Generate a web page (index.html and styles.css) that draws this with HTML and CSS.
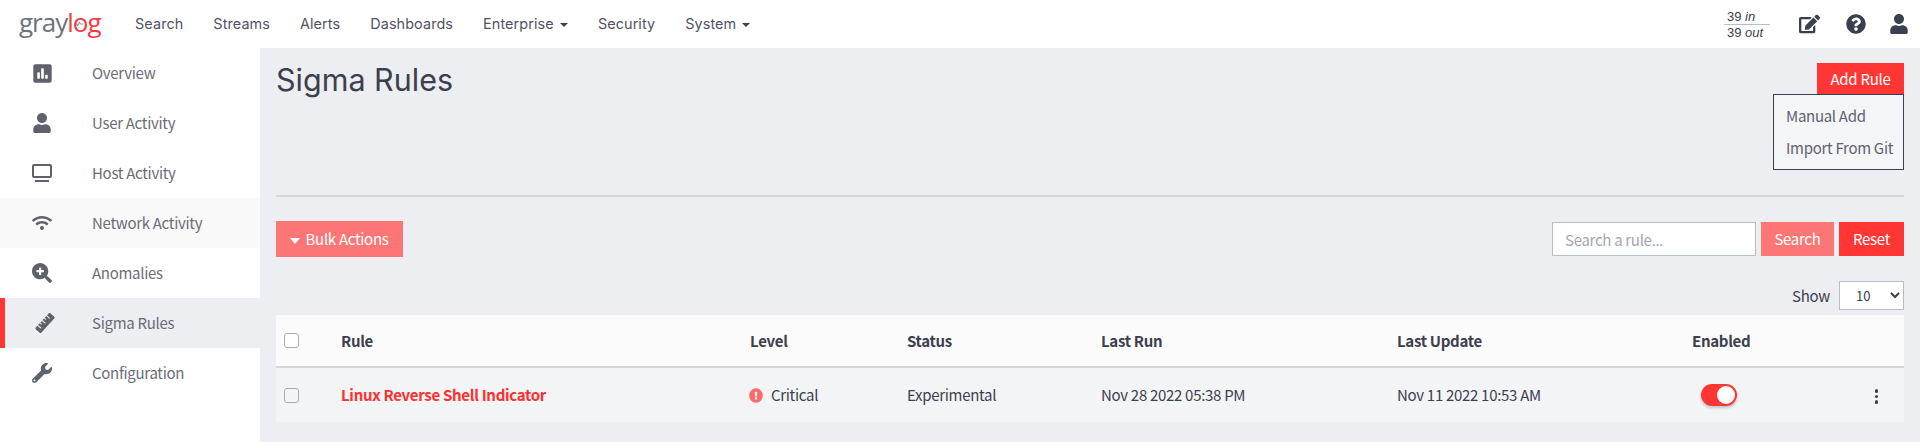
FILE: index.html
```html
<!DOCTYPE html>
<html lang="en">
<head>
  <meta charset="UTF-8" />
  <title>Sigma Rules - Graylog</title>
  <link rel="stylesheet" href="styles.css">
</head>
<body>

  <header class="topbar">
    <a class="logo" href="#">
      <span class="logo-gray">gray</span><span class="logo-red">log</span>
      <svg class="logo-pulse" viewBox="0 0 10 6"><path d="M0 3h3l1.2 2L6 1l1 2h3"/></svg>
    </a>
    <nav class="topnav">
      <a href="#">Search</a>
      <a href="#">Streams</a>
      <a href="#">Alerts</a>
      <a href="#">Dashboards</a>
      <a href="#">Enterprise <i class="caret"></i></a>
      <a href="#">Security</a>
      <a href="#">System <i class="caret"></i></a>
    </nav>
    <div class="top-right">
      <div class="traffic">
        <div class="traffic-in">39 <em>in</em></div>
        <div>39 <em>out</em></div>
      </div>
      <svg class="top-icon icon-edit" viewBox="0 0 576 512"><path d="M402.6 83.2l90.2 90.2c3.8 3.8 3.8 10 0 13.8L274.4 405.6l-92.8 10.3c-12.4 1.4-22.9-9.1-21.5-21.5l10.3-92.8L388.8 83.2c3.8-3.8 10-3.8 13.8 0zm162-22.9l-48.8-48.8c-15.2-15.2-39.9-15.2-55.2 0l-35.4 35.4c-3.8 3.8-3.8 10 0 13.8l90.2 90.2c3.8 3.8 10 3.8 13.8 0l35.4-35.4c15.2-15.3 15.2-40 0-55.2zM384 346.2V448H64V128h229.8c3.2 0 6.2-1.3 8.5-3.5l40-40c7.6-7.6 2.2-20.5-8.5-20.5H48C21.5 64 0 85.5 0 112v352c0 26.5 21.5 48 48 48h352c26.5 0 48-21.5 48-48V306.2c0-10.7-12.9-16-20.5-8.5l-40 40c-2.2 2.3-3.5 5.3-3.5 8.5z"/></svg>
      <svg class="top-icon icon-help" viewBox="0 0 512 512"><path d="M504 256c0 136.997-111.043 248-248 248S8 392.997 8 256C8 119.083 119.043 8 256 8s248 111.083 248 248zM262.655 90c-54.497 0-89.255 22.957-116.549 63.758-3.536 5.286-2.353 12.415 2.715 16.258l34.699 26.31c5.205 3.947 12.621 3.008 16.665-2.122 17.864-22.658 30.113-35.797 57.303-35.797 20.429 0 45.698 13.148 45.698 32.958 0 14.976-12.363 22.667-32.534 33.976C247.128 238.528 216 254.941 216 296v4c0 6.627 5.373 12 12 12h56c6.627 0 12-5.373 12-12v-1.333c0-28.462 83.186-29.647 83.186-106.667 0-58.002-60.165-102-116.531-102zM256 338c-25.365 0-46 20.635-46 46 0 25.364 20.635 46 46 46s46-20.636 46-46c0-25.365-20.635-46-46-46z"/></svg>
      <svg class="top-icon icon-user" viewBox="0 0 448 512"><path d="M224 256c70.7 0 128-57.3 128-128S294.7 0 224 0 96 57.3 96 128s57.3 128 128 128zm89.6 32h-16.7c-22.2 10.2-46.9 16-72.9 16s-50.6-5.8-72.9-16h-16.7C60.2 288 0 348.2 0 422.4V464c0 26.5 21.5 48 48 48h352c26.5 0 48-21.5 48-48v-41.6c0-74.2-60.2-134.4-134.4-134.4z"/></svg>
    </div>
  </header>

  <div class="layout">
    <aside class="sidebar">
      <a class="side-item" href="#">
        <span class="side-icon"><svg width="19" height="21" viewBox="0 0 448 512"><path d="M400 32H48C21.5 32 0 53.5 0 80v352c0 26.5 21.5 48 48 48h352c26.5 0 48-21.5 48-48V80c0-26.5-21.5-48-48-48zM160 368c0 8.84-7.16 16-16 16h-32c-8.84 0-16-7.16-16-16V240c0-8.84 7.16-16 16-16h32c8.84 0 16 7.16 16 16v128zm96 0c0 8.84-7.16 16-16 16h-32c-8.84 0-16-7.16-16-16V144c0-8.84 7.16-16 16-16h32c8.84 0 16 7.16 16 16v224zm96 0c0 8.84-7.16 16-16 16h-32c-8.84 0-16-7.16-16-16v-64c0-8.84 7.16-16 16-16h32c8.84 0 16 7.16 16 16v64z"/></svg></span>
        Overview
      </a>
      <a class="side-item" href="#">
        <span class="side-icon"><svg width="18" height="20" viewBox="0 0 448 512"><path d="M224 256c70.7 0 128-57.3 128-128S294.7 0 224 0 96 57.3 96 128s57.3 128 128 128zm89.6 32h-16.7c-22.2 10.2-46.9 16-72.9 16s-50.6-5.8-72.9-16h-16.7C60.2 288 0 348.2 0 422.4V464c0 26.5 21.5 48 48 48h352c26.5 0 48-21.5 48-48v-41.6c0-74.2-60.2-134.4-134.4-134.4z"/></svg></span>
        User Activity
      </a>
      <a class="side-item" href="#">
        <span class="side-icon"><svg width="20" height="18" viewBox="0 0 20 18"><path d="M2 0h16a2 2 0 0 1 2 2v10a2 2 0 0 1-2 2H2a2 2 0 0 1-2-2V2a2 2 0 0 1 2-2zm0 2v10h16V2zM3 16h14v2H3z"/></svg></span>
        Host Activity
      </a>
      <a class="side-item side-item-hover" href="#">
        <span class="side-icon"><svg width="20" height="16" viewBox="0 0 640 512"><path d="M634.91 154.88C457.74-8.99 182.19-8.93 5.09 154.88c-6.66 6.16-6.79 16.59-.35 22.98l34.24 33.97c6.14 6.1 16.02 6.23 22.4.38 145.92-133.68 371.3-133.71 517.25 0 6.38 5.85 16.26 5.71 22.4-.38l34.24-33.97c6.43-6.39 6.3-16.82-.36-22.98zM320 352c-35.35 0-64 28.65-64 64s28.65 64 64 64 64-28.65 64-64-28.65-64-64-64zm202.67-83.59c-115.26-101.93-290.21-101.82-405.34 0-6.9 6.1-7.12 16.69-.57 23.15l34.44 33.99c6 5.92 15.66 6.32 22.05.8 83.95-72.57 209.74-72.41 293.49 0 6.39 5.52 16.05 5.13 22.05-.8l34.44-33.99c6.56-6.46 6.33-17.06-.56-23.15z"/></svg></span>
        Network Activity
      </a>
      <a class="side-item" href="#">
        <span class="side-icon"><svg width="20" height="20" viewBox="0 0 512 512" fill-rule="evenodd"><path d="M304 192v32c0 6.6-5.4 12-12 12h-56v56c0 6.6-5.4 12-12 12h-32c-6.6 0-12-5.4-12-12v-56h-56c-6.6 0-12-5.4-12-12v-32c0-6.6 5.4-12 12-12h56v-56c0-6.6 5.4-12 12-12h32c6.6 0 12 5.4 12 12v56h56c6.6 0 12 5.4 12 12zm201 284.7L476.7 505c-9.4 9.4-24.6 9.4-33.9 0L343 405.3c-4.5-4.5-7-10.6-7-17V372c-35.3 27.6-79.7 44-128 44C93.1 416 0 322.9 0 208S93.1 0 208 0s208 93.1 208 208c0 48.3-16.4 92.7-44 128h16.3c6.4 0 12.5 2.5 17 7l99.7 99.7c9.3 9.4 9.3 24.6 0 34z"/></svg></span>
        Anomalies
      </a>
      <a class="side-item side-item-active" href="#">
        <span class="side-icon"><svg class="ruler" width="22" height="20" viewBox="0 0 640 512"><path d="M635.7 167.2L556.1 31.7c-8.8-15-28.3-20.1-43.5-11.5l-69 39.1L503.3 161c2.2 3.8.9 8.5-2.9 10.7l-13.8 7.8c-3.8 2.2-8.7.9-10.9-2.9L416 75l-55.2 31.3 27.9 47.4c2.2 3.8.9 8.5-2.9 10.7l-13.8 7.8c-3.8 2.2-8.7.9-10.9-2.9L333.2 122 278 153.3 337.8 255c2.2 3.7.9 8.5-2.9 10.7l-13.8 7.8c-3.8 2.2-8.7.9-10.9-2.9l-59.7-101.7-55.2 31.3 27.9 47.4c2.2 3.8.9 8.5-2.9 10.7l-13.8 7.8c-3.8 2.2-8.7.9-10.9-2.9l-27.9-47.5-55.2 31.3 59.7 101.7c2.2 3.7.9 8.5-2.9 10.7l-13.8 7.8c-3.8 2.2-8.7.9-10.9-2.9L84.9 262.9l-69 39.1C.7 310.7-4.6 329.8 4.2 344.8l79.6 135.6c8.8 15 28.3 20.1 43.5 11.5L624.1 210c15.2-8.6 20.4-27.8 11.6-42.8z"/></svg></span>
        Sigma Rules
      </a>
      <a class="side-item" href="#">
        <span class="side-icon"><svg width="20" height="20" viewBox="0 0 512 512"><path d="M507.73 109.1c-2.24-9.03-13.54-12.09-20.12-5.51l-74.36 74.36-67.88-11.31-11.31-67.88 74.36-74.36c6.62-6.62 3.43-17.9-5.66-20.16-47.38-11.74-99.55.91-136.58 37.93-39.64 39.64-50.55 97.1-34.05 147.2L18.74 402.76c-24.99 24.99-24.99 65.51 0 90.5 24.99 24.99 65.51 24.99 90.5 0l213.21-213.21c50.12 16.71 107.47 5.68 147.37-34.22 37.07-37.07 49.7-89.32 37.91-136.73zM64 472c-13.25 0-24-10.75-24-24 0-13.26 10.75-24 24-24s24 10.74 24 24c0 13.25-10.75 24-24 24z"/></svg></span>
        Configuration
      </a>
    </aside>

    <main class="content">
      <section class="page-head">
        <h1>Sigma Rules</h1>
        <div class="add-rule">
          <button class="btn btn-red btn-add">Add Rule</button>
          <div class="add-menu">
            <a href="#">Manual Add</a>
            <a href="#">Import From Git</a>
          </div>
        </div>
      </section>

      <section class="toolbar">
        <button class="btn btn-light btn-bulk"><i class="caret"></i>Bulk Actions</button>
        <div class="search-box">
          <input type="text" placeholder="Search a rule...">
          <button class="btn btn-light btn-search">Search</button>
          <button class="btn btn-red btn-reset">Reset</button>
        </div>
      </section>

      <section class="show-row">
        <label for="show">Show</label>
        <select id="show">
          <option>10</option>
          <option>25</option>
          <option>50</option>
        </select>
      </section>

      <section class="rules">
        <div class="cols rules-head">
          <span class="check"></span>
          <span>Rule</span>
          <span>Level</span>
          <span>Status</span>
          <span>Last Run</span>
          <span>Last Update</span>
          <span>Enabled</span>
        </div>
        <div class="cols rules-row">
          <span class="check"></span>
          <a class="rule-name" href="#">Linux Reverse Shell Indicator</a>
          <span class="level"><svg width="14" height="15" viewBox="0 0 512 512" preserveAspectRatio="none"><path d="M504 256c0 136.997-111.043 248-248 248S8 392.997 8 256C8 119.083 119.043 8 256 8s248 111.083 248 248zm-248 50c-25.405 0-46 20.595-46 46s20.595 46 46 46 46-20.595 46-46-20.595-46-46-46zm-43.673-165.346l7.418 136c.347 6.364 5.609 11.346 11.982 11.346h48.546c6.373 0 11.635-4.982 11.982-11.346l7.418-136c.375-6.874-5.098-12.654-11.982-12.654h-63.383c-6.884 0-12.356 5.78-11.981 12.654z"/></svg>Critical</span>
          <span>Experimental</span>
          <span>Nov 28 2022 05:38 PM</span>
          <span>Nov 11 2022 10:53 AM</span>
          <span class="toggle-cell"><i class="toggle"><i class="knob"></i></i></span>
          <span class="dots"><i></i><i></i><i></i></span>
        </div>
      </section>
    </main>
  </div>

</body>
</html>
```

FILE: styles.css
```css
* {
  box-sizing: border-box;
}

html,
body {
  height: 100%;
}

body {
  margin: 0;
  overflow: hidden;
  font-family: "Noto Sans CJK SC", "Source Sans Pro", "Open Sans", sans-serif;
  font-size: 15px;
  letter-spacing: -0.3px;
  line-height: 20px;
  color: #3c3f4d;
  background-color: #edeef2;
}

a {
  color: inherit;
  text-decoration: none;
}

/* top bar */

.topbar {
  display: flex;
  align-items: center;
  height: 48px;
  background-color: white;
}

.logo {
  position: relative;
  width: 120px;
  padding-left: 19px;
  font-family: "Open Sans", sans-serif;
  font-size: 26px;
  line-height: 30px;
  letter-spacing: -1px;
  margin-top: -5px;
}

.logo-gray {
  color: #6b7280;
}

.logo-red {
  color: #f23b42;
}

.logo-pulse {
  position: absolute;
  left: 74px;
  top: 14px;
  width: 9px;
  height: 6px;
  fill: none;
  stroke: #6b7280;
  stroke-width: 0.9;
}

.topnav {
  display: flex;
}

.topnav a {
  padding: 0 15px;
  font-family: Inter, sans-serif;
  font-size: 14.4px;
  letter-spacing: 0.1px;
  color: #50535f;
}

.caret {
  display: inline-block;
  width: 0;
  height: 0;
  margin-left: 2px;
  vertical-align: middle;
  border-top: 4px solid #3c3f4d;
  border-left: 4px solid transparent;
  border-right: 4px solid transparent;
}

.top-right {
  display: flex;
  align-items: center;
  margin-left: auto;
  padding-right: 12px;
}

.traffic {
  width: 46px;
  margin-right: 29px;
  padding-left: 3px;
  font-family: "Liberation Sans", sans-serif;
  font-size: 13px;
  letter-spacing: 0;
  line-height: 15px;
}

.traffic-in {
  margin-left: -3px;
  padding-left: 3px;
  border-bottom: 1px solid #b6bdcd;
}

.top-icon {
  fill: #3c3f4d;
  height: 20px;
}

.icon-edit {
  width: 21px;
}

.icon-help {
  width: 20px;
  margin-left: 26px;
}

.icon-user {
  width: 18px;
  margin-left: 24px;
}

/* sidebar */

.layout {
  display: flex;
  height: 394px;
}

.sidebar {
  width: 260px;
  flex-shrink: 0;
  background-color: white;
}

.side-item {
  display: flex;
  align-items: center;
  height: 50px;
  color: #6a6d78;
}

.side-icon {
  display: flex;
  justify-content: center;
  align-items: center;
  width: 84px;
  margin-right: 8px;
}

.side-icon svg {
  fill: #5f626d;
}

.side-item-hover {
  background-color: #f9f9fa;
}

.side-item-active {
  background-color: #edeef2;
  border-left: 5px solid #ff3633;
}

.side-item-active .side-icon {
  width: 79px;
}

.ruler {
  transform: rotate(-18deg);
}

/* main */

.content {
  flex: 1;
  padding: 15px 16px 0;
}

.page-head {
  display: flex;
  justify-content: space-between;
  align-items: flex-start;
  height: 134px;
  border-bottom: 2px solid #d4d5d9;
}

.page-head h1 {
  margin: 0;
  font-family: Inter, sans-serif;
  font-size: 30.5px;
  font-weight: 400;
  letter-spacing: 0;
  line-height: 34px;
  color: #3c3f4d;
}

.btn {
  border: 0;
  color: white;
  font-family: inherit;
  font-size: 15px;
  letter-spacing: -0.3px;
  line-height: 20px;
  padding: 0;
}

.btn-red {
  background-color: #ff3633;
}

.btn-light {
  background-color: #fc7676;
}

.add-rule {
  position: relative;
}

.btn-add {
  display: block;
  width: 87px;
  height: 31px;
}

.add-menu {
  position: absolute;
  top: 31px;
  right: 0;
  width: 131px;
  height: 76px;
  padding: 5px 0 0 12px;
  background-color: #f4f5f7;
  border: 1px solid #3c3f4d;
  color: #60636f;
}

.add-menu a {
  display: block;
  height: 32px;
  line-height: 32px;
  white-space: nowrap;
}

.toolbar {
  display: flex;
  justify-content: space-between;
  align-items: center;
  margin-top: 24px;
  height: 36px;
}

.btn-bulk {
  width: 127px;
  height: 36px;
}

.btn-bulk .caret {
  margin: 0 6px 0 -1px;
  border-top: 6px solid white;
  border-left: 5px solid transparent;
  border-right: 5px solid transparent;
}

.search-box {
  display: flex;
  align-items: center;
  gap: 5px;
}

.search-box input {
  width: 204px;
  height: 34px;
  padding: 0 12px;
  font-family: inherit;
  font-size: 15px;
  letter-spacing: -0.3px;
  color: #3c3f4d;
  background-color: white;
  border: 1px solid #b6bdcd;
  border-radius: 0;
  outline: none;
}

.search-box input::placeholder {
  color: #a5a7ad;
}

.btn-search {
  width: 73px;
  height: 34px;
}

.btn-reset {
  width: 65px;
  height: 34px;
}

.show-row {
  display: flex;
  justify-content: flex-end;
  align-items: center;
  gap: 9px;
  height: 29px;
  margin-top: 24px;
}

.show-row select {
  width: 65px;
  height: 29px;
  padding-left: 12px;
  font-family: inherit;
  font-size: 13px;
  color: #3c3f4d;
  background-color: white;
  border: 1px solid #b6bdcd;
  border-radius: 0;
}

/* rules table */

.rules {
  margin-top: 5px;
}

.cols {
  display: grid;
  grid-template-columns: 57px 409px 157px 194px 296px 295px 1fr;
  align-items: center;
  padding-left: 8px;
}

.rules-head {
  height: 53px;
  font-weight: 700;
  background-color: #fbfbfb;
  border-bottom: 2px solid #d4d5d9;
}

.rules-row {
  position: relative;
  height: 54px;
  background-color: #f3f4f6;
}

.check {
  display: block;
  width: 15px;
  height: 15px;
  background-color: white;
  border: 1.5px solid #a9abb0;
  border-radius: 3px;
}

.rules-row .check {
  background-color: #f3f4f6;
}

.rule-name {
  font-weight: 700;
  color: #ff2f2f;
}

.level {
  display: flex;
  align-items: center;
  gap: 8px;
  margin-left: -1px;
}

.level svg {
  fill: #fc6a6a;
}

.toggle-cell {
  display: block;
}

.toggle {
  display: block;
  position: relative;
  width: 36px;
  height: 22px;
  margin-left: 9px;
  background-color: #ff3633;
  border-radius: 11px;
  box-shadow: 0 2px 3px rgba(0, 0, 0, 0.2);
}

.knob {
  position: absolute;
  top: 2px;
  right: 2px;
  width: 18px;
  height: 18px;
  background-color: white;
  border-radius: 50%;
}

.dots {
  position: absolute;
  right: 26px;
  top: 21px;
  display: flex;
  flex-direction: column;
  gap: 2px;
}

.dots i {
  width: 3.5px;
  height: 3.5px;
  background-color: #3c3f4d;
  border-radius: 50%;
}
```
